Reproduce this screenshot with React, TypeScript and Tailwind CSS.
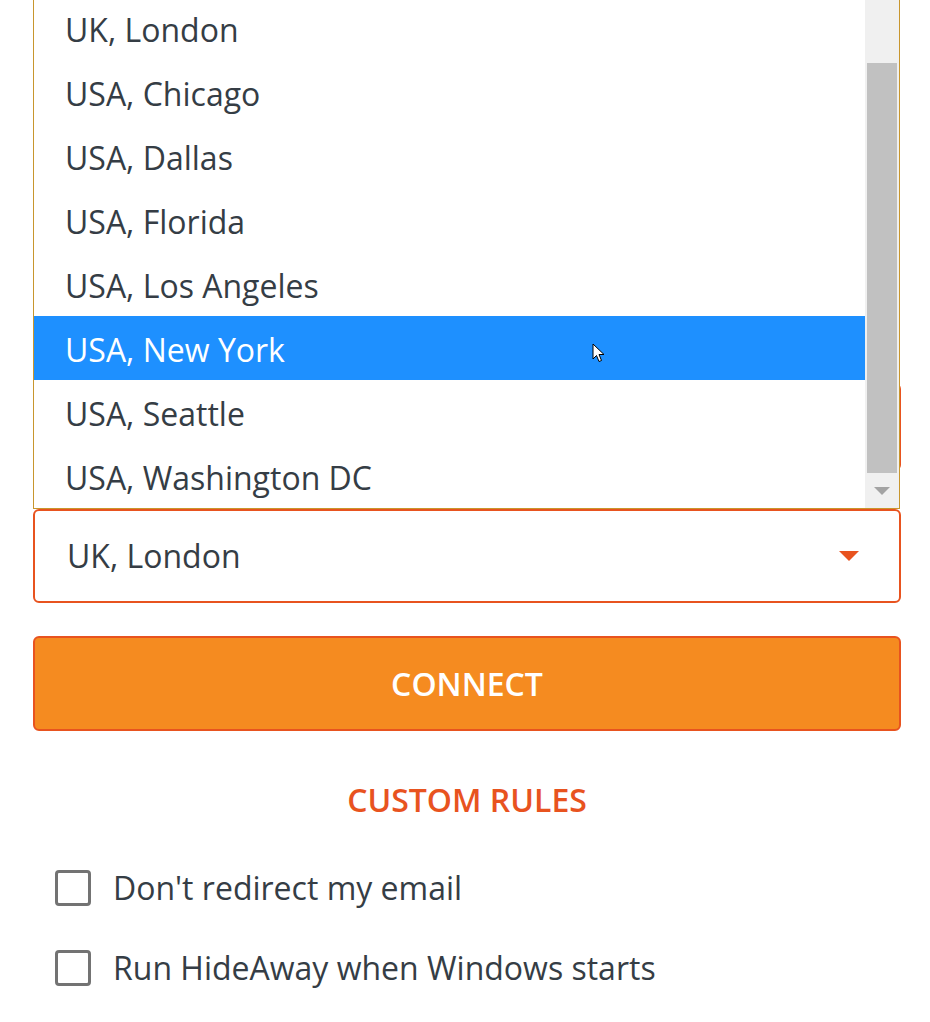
const cities = [
  "UK, London",
  "USA, Chicago",
  "USA, Dallas",
  "USA, Florida",
  "USA, Los Angeles",
  "USA, New York",
  "USA, Seattle",
  "USA, Washington DC",
];

function Checkbox({ label }: { label: string }) {
  return (
    <label className="flex items-center gap-[22px] pl-[22px]">
      <span className="w-[36px] h-[36px] border-[3px] border-[#737373] rounded-[4px] bg-white" />
      <span className="text-[32px] leading-[44px] text-[#353d45]">{label}</span>
    </label>
  );
}

function Cursor() {
  return (
    <svg
      className="absolute left-[592px] top-[343px]"
      width="14"
      height="22"
      viewBox="0 0 14 22"
    >
      <path
        d="M1 1 L1 16 L4.5 12.5 L7 18.5 L9.5 17.5 L7 11.5 L12 11.5 Z"
        fill="white"
        stroke="black"
        strokeWidth="1"
        strokeLinejoin="round"
      />
    </svg>
  );
}

export default function App() {
  const selected = "USA, New York";

  return (
    <div
      className="relative w-[930px] h-[1022px] overflow-hidden bg-white pl-[33px] pr-[29px]"
      style={{ fontFamily: '"Open Sans", "Noto Sans", sans-serif' }}
    >
      {/* status area, mostly hidden behind the open list */}
      <div className="mt-[383px] h-[88px] rounded-[6px] border-2 border-[#e8531f] bg-[#f58b20]" />

      {/* location select */}
      <div className="mt-[38px] h-[94px] rounded-[6px] border-2 border-[#e8531f] flex items-center justify-between pl-[32px] pr-[40px]">
        <span className="text-[32px] text-[#353d45]">UK, London</span>
        <svg width="20" height="11" viewBox="0 0 20 11">
          <path d="M0 0 L20 0 L10 10 Z" fill="#e8531f" />
        </svg>
      </div>

      {/* connect */}
      <button className="mt-[33px] w-full h-[95px] rounded-[6px] border-2 border-[#e8531f] bg-[#f58b20] text-white text-[32px] font-semibold">
        CONNECT
      </button>

      <div className="mt-[47px] text-center text-[32px] font-semibold text-[#e8531f] leading-[44px]">
        CUSTOM RULES
      </div>

      <div className="mt-[44px] flex flex-col gap-[36px]">
        <Checkbox label="Don't redirect my email" />
        <Checkbox label="Run HideAway when Windows starts" />
      </div>

      {/* open dropdown list */}
      <div className="absolute left-[33px] top-0 w-[867px] h-[509px] bg-white border-l border-r border-b border-[#c8962e] flex overflow-hidden">
        <div className="flex-1 -mt-[4px]">
          {cities.map((c) => (
            <div
              key={c}
              className={
                c === selected
                  ? "h-[64px] flex items-center pl-[31px] pt-[3px] text-[32px] bg-[#1e90ff] text-white"
                  : "h-[64px] flex items-center pl-[31px] pt-[3px] text-[32px] text-[#353d45]"
              }
            >
              {c}
            </div>
          ))}
        </div>
        <div className="w-[34px] bg-[#f0f0f0] flex flex-col px-[2px]">
          <div className="h-[63px]" />
          <div className="h-[410px] bg-[#c1c1c1]" />
          <div className="flex-1 flex items-center justify-center">
            <svg width="16" height="8" viewBox="0 0 16 8">
              <path d="M0 0 L16 0 L8 8 Z" fill="#a3a3a3" />
            </svg>
          </div>
        </div>
      </div>

      <Cursor />
    </div>
  );
}
